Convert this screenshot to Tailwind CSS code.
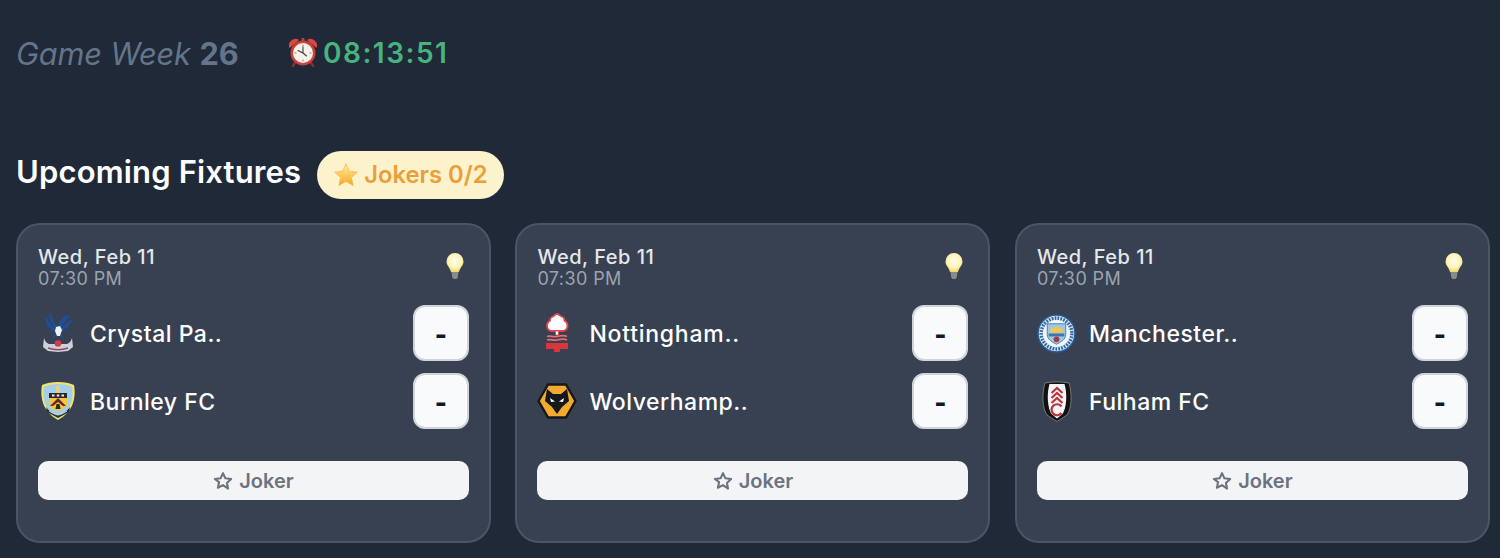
<!DOCTYPE html>
<html lang="en">
<head>
  <meta charset="UTF-8" />
  <title>Upcoming Fixtures</title>
  <script src="https://cdn.jsdelivr.net/npm/@tailwindcss/browser@4"></script>
</head>
<body class="bg-[#1f2937] h-[558px] overflow-hidden font-['Inter',sans-serif]">

  <div class="pl-[16px] pr-[10.1px] pt-[35px]">
    <!-- game week + countdown -->
    <div class="flex items-center h-[38px]">
      <div class="w-[272px] text-[#64748b] text-[30.7px] leading-[38px] tracking-[-.1px]"><i>Game Week</i> <b class="font-bold">26</b></div>
      <svg class="w-[30px] h-[30px] -mt-1" viewBox="0 0 30 30">
        <path d="M8 24l-3 5M22 24l3 5" stroke="#8f2f2f" stroke-width="2.400" stroke-linecap="round"/>
        <path d="M1.500 11a6.500 6.500 0 0 1 9.500-8zM28.500 11a6.500 6.500 0 0 0-9.500-8z" fill="#d9483f"/>
        <rect x="13.600" y="1" width="2.800" height="3.500" fill="#b8453d"/>
        <circle cx="15" cy="16" r="12.500" fill="#cf3f38"/>
        <circle cx="15" cy="16" r="10" fill="#f6f1ea"/>
        <path d="M15 7.500v2M15 22.500v2M6.500 16h2M21.500 16h2" stroke="#8a8178" stroke-width="1"/>
        <path d="M15 10v6l-5-2.500M15 16l3.500 3" stroke="#3f3f3f" stroke-width="1.100" fill="none" stroke-linecap="round"/>
      </svg>
      <span class="ml-[5px] -mt-[2px] text-[#48b47d] text-[28px] leading-[38px] font-semibold tracking-[1.5px]">08:13:51</span>
    </div>

    <!-- heading -->
    <div class="flex items-center mt-[78px] h-[48px]">
      <h2 class="text-white text-[31px] leading-[48px] font-semibold -mt-[6px] tracking-[.15px]">Upcoming Fixtures</h2>
      <div class="ml-[16px] w-[187px] h-[48px] rounded-full bg-[#fcf3cd] flex items-center pl-[16px]">
        <svg class="w-[26px] h-[26px]" viewBox="0 0 24 24">
          <defs>
            <linearGradient id="star" x1="0" y1="0" x2="0" y2="1">
              <stop offset="0" stop-color="#fff0a0"/>
              <stop offset="1" stop-color="#f5a623"/>
            </linearGradient>
          </defs>
          <path d="M12 1.500l3.200 7 7.300.8-5.500 5 1.600 7.500L12 18l-6.600 3.800L7 14.300l-5.500-5 7.300-.8z" fill="url(#star)" stroke="#f2b33d" stroke-width=".6" stroke-linejoin="round"/>
        </svg>
        <span class="ml-[5px] text-[#ea9f39] text-[23.8px] leading-[30px] font-semibold">Jokers 0/2</span>
      </div>
    </div>

    <!-- fixtures -->
    <div class="grid grid-cols-3 gap-[24.45px] mt-[24px]">

      <div class="h-[320px] rounded-[24px] border-2 border-[#4b5563] bg-[#374151] px-[20px] pt-[20px]">
        <div class="flex justify-between">
          <div>
            <div class="text-[#e5e7eb] text-[20px] leading-[24px] font-medium tracking-[.5px]">Wed, Feb 11</div>
            <div class="text-[#9ca3af] text-[18px] leading-[20px] tracking-[.4px]">07:30 PM</div>
          </div>
          <svg class="w-[24px] h-[28px] mt-[7px] mr-[2px]" viewBox="0 0 24 28">
            <defs>
              <radialGradient id="bulb" cx=".5" cy=".4" r=".6">
                <stop offset="0" stop-color="#fffdf0"/>
                <stop offset=".65" stop-color="#fdf3b4"/>
                <stop offset="1" stop-color="#f2d66e"/>
              </radialGradient>
            </defs>
            <path d="M12 1a8.500 8.500 0 0 0-8.500 8.500c0 4 3.500 6 4.500 10.500h8c1-4.500 4.500-6.500 4.500-10.500A8.500 8.500 0 0 0 12 1z" fill="url(#bulb)"/>
            <path d="M8.500 20h7l-.8 5.500-1.200 1.500h-3l-1.200-1.500z" fill="#8b8b86"/>
          </svg>
        </div>

        <div class="flex items-center justify-between mt-[16px] h-[56px]">
          <div class="flex items-center">
            <div class="w-[40px] h-[42px] flex items-center justify-center">
              <svg class="w-[32px] h-[40px]" viewBox="0 0 32 40">
                <g fill="none" stroke="#1f4e9e" stroke-width="2" stroke-linecap="round">
                  <path d="M8 1c0 6 3 10 7 15M4 5c2 5 5 9 10 13M9 4c1 4 3 8 6 10M5 11c2 3 5 5 9 8"/>
                  <path d="M27 3c-4 3-7 7-9 13M29 8c-4 2-7 6-10 10M24 3c-3 2-5 6-7 9M26 13c-3 1-5 3-7 6"/>
                </g>
                <path d="M14 14l4-1 2 4-2 6h-3l-2-5z" fill="#eef1f6"/>
                <path d="M13 22l-2 3M19 22l2 3" stroke="#1f4e9e" stroke-width="1.800"/>
                <path d="M2 25c1 3 2 5 5 6h18c3-1 4-3 5-6l1 9-5 4-10 1-10-1-5-4z" fill="#cfd1da"/>
                <circle cx="16" cy="30.500" r="3.300" fill="#d63b40"/>
                <path d="M6 35c6 2 14 2 20 0" stroke="#8d4468" stroke-width="1.500" fill="none"/>
              </svg>
            </div>
            <span class="ml-[12px] pt-[2px] text-white text-[23px] font-medium tracking-[.5px]">Crystal Pa..</span>
          </div>
          <div class="w-[56px] h-[56px] rounded-[12px] bg-[#f9fafb] border-2 border-[#d1d5db] flex items-center justify-center pt-[3px] text-[#111827] text-[26px] font-extrabold">-</div>
        </div>

        <div class="flex items-center justify-between mt-[12px] h-[56px]">
          <div class="flex items-center">
            <div class="w-[40px] h-[42px] flex items-center justify-center">
              <svg class="w-[36px] h-[40px]" viewBox="0 0 36 40">
                <path d="M18 1c6 0 12 1 16 3 2 12 0 26-16 35C2 30 0 16 2 4c4-2 10-3 16-3z" fill="#f1e36c"/>
                <path d="M18 3c5 0 10 1 14 2.500 1.500 11 0 24-14 31.500C4 29.500 2.500 16.500 4 5.500 8 4 13 3 18 3z" fill="#a5cfe6"/>
                <path d="M9 12h18v12c-2 3-5 5-9 6-4-1-7-3-9-6z" fill="#f0c93c"/>
                <path d="M9 12h18v5H9z" fill="#2d2630"/>
                <path d="M12 13.500h2.500v2H12zM16.800 13.500h2.500v2h-2.500zM21.500 13.500H24v2h-2.500z" fill="#f3efe0"/>
                <path d="M18 17l8 8h-3l-5-4-5 4h-3z" fill="#6b2334"/>
                <path d="M16.500 23h3l1 5h-5z" fill="#2d2630"/>
                <path d="M16 5h4v7h-4z" fill="#e7d27a"/>
                <path d="M6 26c3 4 7 7 12 8 5-1 9-4 12-8l-1 5-11 6-11-6z" fill="#26323f"/>
                <path d="M9 30c3 2 6 3.500 9 4 3-.5 6-2 9-4" stroke="#e8edf1" stroke-width=".8" fill="none"/>
              </svg>
            </div>
            <span class="ml-[12px] pt-[2px] text-white text-[23px] font-medium tracking-[.5px]">Burnley FC</span>
          </div>
          <div class="w-[56px] h-[56px] rounded-[12px] bg-[#f9fafb] border-2 border-[#d1d5db] flex items-center justify-center pt-[3px] text-[#111827] text-[26px] font-extrabold">-</div>
        </div>

        <button class="w-full h-[39px] mt-[32px] rounded-[10px] bg-[#f3f4f6] flex items-center justify-center text-[#6b7280] text-[20px] font-semibold">
          <svg class="w-[20px] h-[20px] mr-[6px]" viewBox="0 0 24 24" fill="none" stroke="currentColor" stroke-width="2.500" stroke-linejoin="round"><path d="M12 2.500l2.900 6.300 6.900.8-5.100 4.700 1.400 6.800L12 17l-6.100 3.100 1.400-6.800L2.200 9.600l6.900-.8z"/></svg>
          Joker
        </button>
      </div>

      <div class="h-[320px] rounded-[24px] border-2 border-[#4b5563] bg-[#374151] px-[20px] pt-[20px]">
        <div class="flex justify-between">
          <div>
            <div class="text-[#e5e7eb] text-[20px] leading-[24px] font-medium tracking-[.5px]">Wed, Feb 11</div>
            <div class="text-[#9ca3af] text-[18px] leading-[20px] tracking-[.4px]">07:30 PM</div>
          </div>
          <svg class="w-[24px] h-[28px] mt-[7px] mr-[2px]" viewBox="0 0 24 28">
            <path d="M12 1a8.500 8.500 0 0 0-8.500 8.500c0 4 3.500 6 4.500 10.500h8c1-4.500 4.500-6.500 4.500-10.500A8.500 8.500 0 0 0 12 1z" fill="url(#bulb)"/>
            <path d="M8.500 20h7l-.8 5.500-1.200 1.500h-3l-1.200-1.500z" fill="#8b8b86"/>
          </svg>
        </div>

        <div class="flex items-center justify-between mt-[16px] h-[56px]">
          <div class="flex items-center">
            <div class="w-[40px] h-[42px] flex items-center justify-center">
              <svg class="w-[24px] h-[40px]" viewBox="0 0 24 40">
                <path d="M12 1c2 0 3 2 4.500 2.500 2 .5 3 2 3 4 1.500 1 3 3 3 5 0 3-2 5-4 5.500H6c-2-.5-4-2.500-4-5.500 0-2 1.500-4 3-5 0-2 1-3.500 3-4C9 3 10 1 12 1z" fill="#fff" stroke="#e0474c" stroke-width="1.800"/>
                <path d="M10.500 18h3v4h-3z" fill="#fff" stroke="#e0474c" stroke-width=".8"/>
                <path d="M2 23.500c3-1.500 6 1 10 0s7-1.500 10 0M2 27c3-1.500 6 1 10 0s7-1.500 10 0" stroke="#ee6b6f" stroke-width="1.800" fill="none"/>
                <path d="M1 30h22v6H1z" fill="#d9363b"/>
                <path d="M9 36h6v3H9z" fill="#d9363b"/>
              </svg>
            </div>
            <span class="ml-[12px] pt-[2px] text-white text-[23px] font-medium tracking-[.75px]">Nottingham..</span>
          </div>
          <div class="w-[56px] h-[56px] rounded-[12px] bg-[#f9fafb] border-2 border-[#d1d5db] flex items-center justify-center pt-[3px] text-[#111827] text-[26px] font-extrabold">-</div>
        </div>

        <div class="flex items-center justify-between mt-[12px] h-[56px]">
          <div class="flex items-center">
            <div class="w-[40px] h-[42px] flex items-center justify-center">
              <svg class="w-[40px] h-[36px]" viewBox="0 0 40 36">
                <path d="M11 1.500h18l9.500 16.500-9.500 16.500H11L1.500 18z" fill="#f4a92f" stroke="#17181c" stroke-width="2.500" stroke-linejoin="round"/>
                <path d="M10 6l6 5h8l6-5 2 12-7 6-5 7-5-7-7-6z" fill="#17181c"/>
                <path d="M13 15l5 3.500-4 .5zM27 15l-5 3.500 4 .5z" fill="#fff"/>
              </svg>
            </div>
            <span class="ml-[12px] pt-[2px] text-white text-[23px] font-medium tracking-[.5px]">Wolverhamp..</span>
          </div>
          <div class="w-[56px] h-[56px] rounded-[12px] bg-[#f9fafb] border-2 border-[#d1d5db] flex items-center justify-center pt-[3px] text-[#111827] text-[26px] font-extrabold">-</div>
        </div>

        <button class="w-full h-[39px] mt-[32px] rounded-[10px] bg-[#f3f4f6] flex items-center justify-center text-[#6b7280] text-[20px] font-semibold">
          <svg class="w-[20px] h-[20px] mr-[6px]" viewBox="0 0 24 24" fill="none" stroke="currentColor" stroke-width="2.500" stroke-linejoin="round"><path d="M12 2.500l2.900 6.300 6.900.8-5.100 4.700 1.400 6.800L12 17l-6.100 3.100 1.400-6.800L2.200 9.600l6.900-.8z"/></svg>
          Joker
        </button>
      </div>

      <div class="h-[320px] rounded-[24px] border-2 border-[#4b5563] bg-[#374151] px-[20px] pt-[20px]">
        <div class="flex justify-between">
          <div>
            <div class="text-[#e5e7eb] text-[20px] leading-[24px] font-medium tracking-[.5px]">Wed, Feb 11</div>
            <div class="text-[#9ca3af] text-[18px] leading-[20px] tracking-[.4px]">07:30 PM</div>
          </div>
          <svg class="w-[24px] h-[28px] mt-[7px] mr-[2px]" viewBox="0 0 24 28">
            <path d="M12 1a8.500 8.500 0 0 0-8.500 8.500c0 4 3.500 6 4.500 10.500h8c1-4.500 4.500-6.500 4.500-10.500A8.500 8.500 0 0 0 12 1z" fill="url(#bulb)"/>
            <path d="M8.500 20h7l-.8 5.500-1.200 1.500h-3l-1.200-1.500z" fill="#8b8b86"/>
          </svg>
        </div>

        <div class="flex items-center justify-between mt-[16px] h-[56px]">
          <div class="flex items-center">
            <div class="w-[40px] h-[42px] flex items-center justify-center">
              <svg class="w-[39px] h-[39px]" viewBox="0 0 40 40">
                <circle cx="20" cy="20" r="19" fill="#dfeaf4" stroke="#27598f" stroke-width="1.600"/>
                <circle cx="20" cy="20" r="15.800" fill="none" stroke="#2f6aa3" stroke-width="3.600" stroke-dasharray="1.800 1.200"/>
                <circle cx="20" cy="20" r="13.500" fill="#f3f7fb"/>
                <path d="M10.500 10h19v11c0 5-5 8-9.500 10-4.500-2-9.500-5-9.500-10z" fill="#9cc9e8" stroke="#2f6aa3" stroke-width=".8"/>
                <path d="M13 19l2-6 2 2 3-3 3 3 2-2 2 6z" fill="#f2c84a"/>
                <path d="M12 20h16v3H12z" fill="#3a76ab"/>
                <circle cx="20" cy="26" r="3" fill="#b03546"/>
              </svg>
            </div>
            <span class="ml-[12px] pt-[2px] text-white text-[23px] font-medium tracking-[.5px]">Manchester..</span>
          </div>
          <div class="w-[56px] h-[56px] rounded-[12px] bg-[#f9fafb] border-2 border-[#d1d5db] flex items-center justify-center pt-[3px] text-[#111827] text-[26px] font-extrabold">-</div>
        </div>

        <div class="flex items-center justify-between mt-[12px] h-[56px]">
          <div class="flex items-center">
            <div class="w-[40px] h-[42px] flex items-center justify-center">
              <svg class="w-[32px] h-[41px]" viewBox="0 0 32 41">
                <path d="M4 2c7-1.500 17-1.500 24 0 3 10 3 25-2 32l-10 6.500-10-6.500C1 27 1 12 4 2z" fill="#111" stroke="#8a8a8a" stroke-width=".8"/>
                <path d="M8.500 3h15c3 10 2 24-2 30L16 37.500 10.500 33C6.500 27 5.500 13 8.500 3z" fill="#f5f5f5"/>
                <g fill="none" stroke="#b9353b" stroke-width="2.200">
                  <path d="M10.500 12l5.500-5 5.500 5M10.500 17l5.500-5 5.500 5M10.500 22l5.500-5 5.500 5"/>
                  <path d="M20.500 25.500a5.500 5.500 0 1 0 0 6.500"/>
                </g>
              </svg>
            </div>
            <span class="ml-[12px] pt-[2px] text-white text-[23px] font-medium tracking-[.5px]">Fulham FC</span>
          </div>
          <div class="w-[56px] h-[56px] rounded-[12px] bg-[#f9fafb] border-2 border-[#d1d5db] flex items-center justify-center pt-[3px] text-[#111827] text-[26px] font-extrabold">-</div>
        </div>

        <button class="w-full h-[39px] mt-[32px] rounded-[10px] bg-[#f3f4f6] flex items-center justify-center text-[#6b7280] text-[20px] font-semibold">
          <svg class="w-[20px] h-[20px] mr-[6px]" viewBox="0 0 24 24" fill="none" stroke="currentColor" stroke-width="2.500" stroke-linejoin="round"><path d="M12 2.500l2.900 6.300 6.900.8-5.100 4.700 1.400 6.800L12 17l-6.100 3.100 1.400-6.800L2.200 9.600l6.900-.8z"/></svg>
          Joker
        </button>
      </div>

    </div>
  </div>

</body>
</html>
